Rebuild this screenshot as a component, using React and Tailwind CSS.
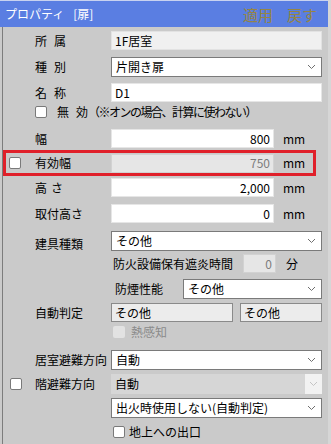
import React from 'react'

const jp = { fontFamily: '"Noto Sans CJK JP", "Noto Sans", sans-serif' }

function Chevron({ light }) {
  return (
    <svg width="9" height="6" viewBox="0 0 9 6" className="shrink-0">
      <polyline points="1,1 4.5,4.5 8,1" fill="none" stroke={light ? '#c4c4c4' : '#6f6f6f'} strokeWidth="1" />
    </svg>
  )
}

function Box({ disabled }) {
  return (
    <span
      className={`block w-[12px] h-[12px] rounded-[2px] border ${
        disabled ? 'border-[#d8d8d8] bg-[#e4e4e4]' : 'border-[#7a7a7a] bg-white'
      }`}
    />
  )
}

function Field({ value, variant = 'white', align = 'left', className = '' }) {
  const look = {
    white: 'bg-white border-[#e6e6e6] text-black',
    ro: 'bg-[#f0f0f0] border-[#e2e2e2] text-black',
    dis: 'bg-[#e6e6e6] border-[#d2d2d2] text-[#7c7c7c]',
    auto: 'bg-[#ececec] border-[#8a8a8a] text-black',
  }[variant]
  return (
    <div
      className={`h-[19px] border flex items-center px-[3px] text-[12px] leading-none ${look} ${
        align === 'right' ? 'justify-end' : ''
      } ${className}`}
    >
      {value}
    </div>
  )
}

function Select({ value, disabled, className = '' }) {
  if (disabled) {
    return (
      <div className={`h-[20px] flex items-center bg-[#d6d6d6] text-[12px] leading-none ${className}`}>
        <span className="flex-1 px-[4px]">{value}</span>
        <span className="h-full w-[17px] bg-[#f2f2f2] flex items-center justify-center">
          <Chevron light />
        </span>
      </div>
    )
  }
  return (
    <div
      className={`h-[20px] border border-[#7a7a7a] bg-white flex items-center pl-[4px] pr-[5px] text-[12px] leading-none ${className}`}
    >
      <span className="flex-1">{value}</span>
      <Chevron />
    </div>
  )
}

function Row({ check, label, children, className = '' }) {
  return (
    <div className={`flex items-center pl-[7px] ${className}`}>
      <div className="w-[25px] flex items-center">{check && <Box />}</div>
      <div className="w-[76px] text-[12px] leading-none text-black whitespace-nowrap">{label}</div>
      <div className="flex-1 flex items-center pr-[6px]">{children}</div>
    </div>
  )
}

function Num({ value, variant = 'white', unit = 'mm' }) {
  return (
    <>
      <Field value={value} variant={variant} align="right" className="w-[163px]" />
      <span className="ml-[9px] text-[12px] leading-none">{unit}</span>
    </>
  )
}

export default function App() {
  return (
    <div className="w-[331px] h-[444px] bg-[#d6d6d6] overflow-hidden select-none" style={jp}>
      <div className="w-[328px] h-full flex flex-col bg-[#cacaca]">
        {/* title bar */}
        <div className="h-[27px] shrink-0 bg-[#5a7ee2] flex items-center pl-[5px] pr-[11px] border-t border-[#c8d2f0]">
          <span className="text-white text-[12px] leading-none">プロパティ</span>
          <span className="text-white text-[12px] leading-none ml-[9px]">[扉]</span>
          <span className="flex-1" />
          <span className="text-[#958545] text-[15px] leading-none">適用</span>
          <span className="text-[#958545] text-[15px] leading-none ml-[14px]">戻す</span>
        </div>

        <div className="flex-1 ml-[2px] border-l border-[#7c7c7c] flex flex-col">
          <Row label={<span className="tracking-[7px]">所属</span>} className="mt-[4px]">
            <Field value="1F居室" variant="ro" className="flex-1" />
          </Row>
          <Row label={<span className="tracking-[7px]">種別</span>} className="mt-[7px]">
            <Select value="片開き扉" className="flex-1" />
          </Row>
          <Row label={<span className="tracking-[7px]">名称</span>} className="mt-[6px]">
            <Field value="D1" className="flex-1" />
          </Row>
          <div className="mt-[3px] h-[14px] flex items-center pl-[32px] text-[12px] leading-none">
            <Box />
            <span className="ml-[10px] whitespace-nowrap">
              <span className="tracking-[7px]">無</span>効
              <span className="tracking-[-1.5px]">（※オンの場合、計算に使わない）</span>
            </span>
          </div>
          <Row label="幅" className="mt-[10px]">
            <Num value="800" />
          </Row>
          <div className="mt-[2px] mr-[12px] h-[26px] border-[3px] border-[#e0202a] flex items-center pl-[3px]">
            <div className="w-[26px] flex items-center">
              <Box />
            </div>
            <div className="w-[76px] text-[12px] leading-none">有効幅</div>
            <Num value="750" variant="dis" />
          </div>
          <Row label={<span className="tracking-[4px]">高さ</span>} className="mt-[2px]">
            <Num value="2,000" />
          </Row>
          <Row label="取付高さ" className="mt-[7px]">
            <Num value="0" />
          </Row>
          <Row label={<span className="relative top-[3px]">建具種類</span>} className="mt-[8px]">
            <Select value="その他" className="flex-1" />
          </Row>
          <div className="mt-[3px] flex items-center pl-[110px] text-[12px] leading-none">
            <span className="w-[130px]">防火設備保有遮炎時間</span>
            <Field value="0" variant="dis" align="right" className="w-[33px]" />
            <span className="ml-[10px]">分</span>
          </div>
          <div className="mt-[6px] flex items-center pl-[112px] pr-[6px] text-[12px] leading-none">
            <span className="w-[68px]">防煙性能</span>
            <Select value="その他" className="flex-1" />
          </div>
          <Row label="自動判定" className="mt-[4px]">
            <Field value="その他" variant="auto" className="w-[122px]" />
            <Field value="その他" variant="auto" className="flex-1 ml-[7px]" />
          </Row>
          <div className="mt-[3px] h-[14px] flex items-center pl-[110px] text-[12px] leading-none text-[#8a8a8a]">
            <span className="block w-[12px] h-[12px] rounded-[2px] bg-[#e2e2e2]" />
            <span className="ml-[6px]">熱感知</span>
          </div>
          <Row label="居室避難方向" className="mt-[11px]">
            <Select value="自動" className="flex-1" />
          </Row>
          <Row check label="階避難方向" className="mt-[4px]">
            <Select value="自動" disabled className="flex-1" />
          </Row>
          <Row label="" className="mt-[4px]">
            <Select value="出火時使用しない(自動判定)" className="flex-1" />
          </Row>
          <div className="mt-[7px] h-[14px] flex items-center pl-[110px] text-[12px] leading-none">
            <Box />
            <span className="ml-[4px]">地上への出口</span>
          </div>
        </div>
      </div>
    </div>
  )
}
